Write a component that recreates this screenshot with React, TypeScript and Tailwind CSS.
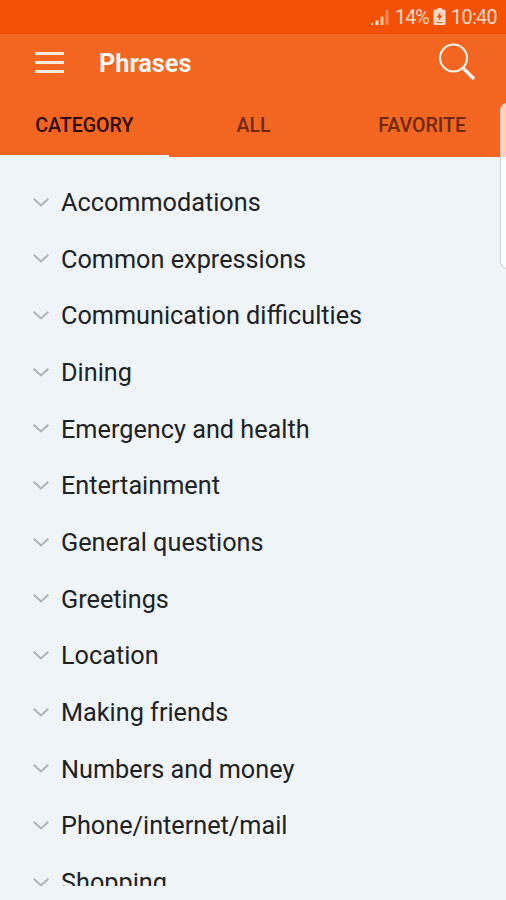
import React from 'react';

const categories = [
  'Accommodations',
  'Common expressions',
  'Communication difficulties',
  'Dining',
  'Emergency and health',
  'Entertainment',
  'General questions',
  'Greetings',
  'Location',
  'Making friends',
  'Numbers and money',
  'Phone/internet/mail',
  'Shopping',
];

function StatusBar() {
  return (
    <div className="flex h-[34px] shrink-0 items-center justify-end bg-[#f35106] pr-[9px] text-[19.700px] leading-none text-[#ffd9c6]">
      <svg className="mr-[6px] h-[17px] w-[18px]" viewBox="0 0 18 17" fill="currentColor">
        <path d="M0 14h2v2H0zM4.500 11.500h3V16h-3z" />
        <path d="M9.500 7.500h3V16h-3z" opacity=".8" />
        <path d="M14.500 1h3v15h-3z" opacity=".4" />
      </svg>
      <span className="w-[33px] whitespace-nowrap pt-px tracking-[-0.9px]">14%</span>
      <svg className="mb-px ml-[5px] mr-[5px] h-[17px] w-[13px]" viewBox="0 0 13 17">
        <path d="M4 0h5v1.500h2q1.500 0 1.500 1.500v12.500q0 1.500-1.500 1.500H2Q.5 17 .5 15.500V3Q.5 1.500 2 1.500h2z" fill="currentColor" />
        <path d="M7.500 4 3.500 9.500H6L5.500 13l4-5.500H7zM3.500 14h6v1h-6z" fill="#f35106" />
      </svg>
      <span className="w-[46px] whitespace-nowrap pt-px tracking-[-0.6px]">10:40</span>
    </div>
  );
}

function Header() {
  return (
    <header className="relative shrink-0 bg-[#f36622]">
      <div className="flex h-[57px] items-center pl-[35px] pr-[30px]">
        <button className="flex w-[29px] flex-col gap-[6px]" aria-label="Menu">
          <span className="h-[3px] w-full bg-[#ffeade]" />
          <span className="h-[3px] w-full bg-[#ffeade]" />
          <span className="h-[3px] w-full bg-[#ffeade]" />
        </button>
        <h1 className="ml-[35px] flex-1 pt-[2px] text-[25.300px] font-bold leading-none text-[#fff5ee]">Phrases</h1>
        <svg className="mb-px h-[38px] w-[37px]" viewBox="0 0 37 38" fill="none" stroke="#fff3ec">
          <circle cx="14.500" cy="15" r="13.500" strokeWidth="2.200" />
          <path d="m24.500 25.500 10.500 10.500" strokeWidth="3.500" />
        </svg>
      </div>
      <nav className="grid h-[66px] grid-cols-3 text-center text-[19.600px] font-medium leading-[70px] text-[#6e2a0b]">
        <span className="text-[#290b00]">CATEGORY</span>
        <span className="pl-px">ALL</span>
        <span className="pl-px">FAVORITE</span>
      </nav>
      <span className="absolute bottom-0 left-0 h-[2px] w-[169px] bg-[#e2f5fb]" />
    </header>
  );
}

export default function App() {
  return (
    <div className="relative flex h-[900px] w-[506px] flex-col overflow-hidden bg-[#eff4f9] font-['Roboto','Liberation_Sans',sans-serif]">
      <StatusBar />
      <Header />
      <ul className="h-[729px] overflow-hidden pt-[16.700px]">
        {categories.map((name) => (
          <li key={name} className="flex h-[56.700px] items-center pl-[33px] text-[25.260px] text-[#202224]">
            <svg className="mr-[12px] h-[9px] w-[16px]" viewBox="0 0 16 9" fill="none" stroke="#aeb3b6" strokeWidth="2">
              <path d="m.7 .7 7.300 6.700 7.300-6.700" />
            </svg>
            <span className="whitespace-nowrap pt-[1.600px]">{name}</span>
          </li>
        ))}
      </ul>
      {/* edge panel handle */}
      <div className="absolute left-[500px] top-[103px] h-[166px] w-[16px] rounded-[7px] border border-[#b9c0c4]/70 bg-white/70" />
    </div>
  );
}
